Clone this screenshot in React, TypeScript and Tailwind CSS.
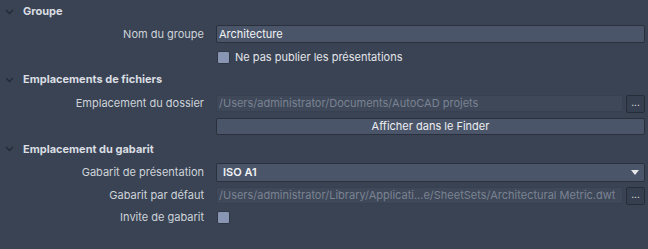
import React from "react";

function Chevron() {
  return (
    <svg width="9" height="6" viewBox="0 0 9 6" className="shrink-0">
      <polyline points="1,1 4.5,4.5 8,1" fill="none" stroke="#222a36" strokeWidth="1.4" />
    </svg>
  );
}

function Header({ title, h }: { title: string; h: string }) {
  return (
    <div className={`flex items-center ${h}`}>
      <div className="w-[23px] pl-[4.5px] flex items-center">
        <Chevron />
      </div>
      <span className="font-bold text-[11px] text-[#dadde2]">{title}</span>
    </div>
  );
}

function Row({ label, h, children }: { label?: string; h: string; children: React.ReactNode }) {
  return (
    <div className={`flex items-center ${h}`}>
      <div className="w-[204px] text-right text-[11px] text-[#cfd3d9] shrink-0">{label}</div>
      <div className="ml-[12px] flex-1 flex items-center h-full pr-[3px]">{children}</div>
    </div>
  );
}

function Browse() {
  return (
    <div className="ml-[3px] w-[19px] h-[18px] border border-[#262d38] bg-[#363f4f] rounded-[2px] flex items-center justify-center text-[10px] text-[#e8eaee] leading-none pb-[3px]">
      ...
    </div>
  );
}

function PathField({ text }: { text: string }) {
  return (
    <div className="flex-1 h-full bg-[#3e4859] border border-[#374051] rounded-[2px] flex items-center px-[2px] text-[11px] text-[#7b8392] whitespace-nowrap overflow-hidden">
      {text}
    </div>
  );
}

function Checkbox() {
  return <div className="w-[13px] h-[13px] bg-[#8896b4] border border-[#2f3745] rounded-[2px] shrink-0" />;
}

export default function App() {
  return (
    <div
      className="w-[648px] h-[249px] bg-[#394354] overflow-hidden"
      style={{ fontFamily: "Inter, 'Liberation Sans', sans-serif" }}
    >
      <Header title="Groupe" h="h-[25px] pb-[2px]" />
      <Row label="Nom du groupe" h="h-[18px]">
        <div className="flex-1 h-full bg-[#4b5569] border border-[#2a313c] rounded-[2px] flex items-center px-[2px] text-[11px] text-[#f2f3f5]">
          Architecture
        </div>
      </Row>
      <div className="mt-[8px]">
        <Row h="h-[13px]">
          <div className="ml-[1px] flex items-center gap-[5px]">
            <Checkbox />
            <span className="text-[11px] text-[#e4e6ea]">Ne pas publier les présentations</span>
          </div>
        </Row>
      </div>
      <Header title="Emplacements de fichiers" h="h-[31px]" />
      <Row label="Emplacement du dossier" h="h-[17px]">
        <PathField text="/Users/administrator/Documents/AutoCAD projets" />
        <Browse />
      </Row>
      <div className="mt-[6px]">
        <Row h="h-[17px]">
          <div className="flex-1 h-full bg-[#4b5569] border border-[#2a313c] rounded-[2px] flex items-center justify-center text-[11px] text-[#eceef1]">
            Afficher dans le Finder
          </div>
        </Row>
      </div>
      <Header title="Emplacement du gabarit" h="h-[28px]" />
      <Row label="Gabarit de présentation" h="h-[19px]">
        <div className="flex-1 h-full bg-[#4b5569] border border-[#2a313c] rounded-[2px] flex items-center justify-between pl-[6px] pr-[5px] text-[11px] font-semibold text-[#f2f3f5]">
          <span>ISO A1</span>
          <svg width="8" height="5" viewBox="0 0 8 5">
            <polygon points="0,0 8,0 4,5" fill="#e6e8ec" />
          </svg>
        </div>
      </Row>
      <div className="mt-[5px]">
        <Row label="Gabarit par défaut" h="h-[17px]">
          <PathField text="/Users/administrator/Library/Applicati...e/SheetSets/Architectural Metric.dwt" />
          <Browse />
        </Row>
      </div>
      <div className="mt-[7px]">
        <Row label="Invite de gabarit" h="h-[13px]">
          <div className="ml-[1px]">
            <Checkbox />
          </div>
        </Row>
      </div>
    </div>
  );
}
